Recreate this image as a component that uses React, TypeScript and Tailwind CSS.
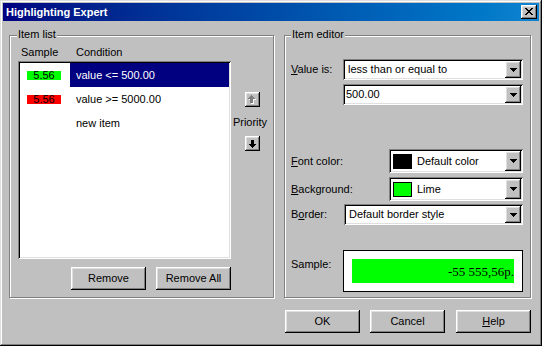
type Px = [number, number, number, number];

const raised =
  "shadow-[inset_-1px_-1px_0_#000000,inset_1px_1px_0_#ffffff,inset_-2px_-2px_0_#808080,inset_2px_2px_0_#dfdfdf]";
const sunken =
  "shadow-[inset_1px_1px_0_#808080,inset_-1px_-1px_0_#ffffff,inset_2px_2px_0_#000000,inset_-2px_-2px_0_#dfdfdf]";

const UP: Px[] = [[3, 0, 1, 1], [2, 1, 3, 1], [1, 2, 5, 1], [0, 3, 7, 1], [2, 4, 3, 4]];
const DOWN: Px[] = [[2, 0, 3, 4], [0, 4, 7, 1], [1, 5, 5, 1], [2, 6, 3, 1], [3, 7, 1, 1]];
const CLOSE: Px[] = [
  [0, 0, 2, 1], [6, 0, 2, 1], [1, 1, 2, 1], [5, 1, 2, 1], [2, 2, 4, 1], [3, 3, 2, 1],
  [2, 4, 4, 1], [1, 5, 2, 1], [5, 5, 2, 1], [0, 6, 2, 1], [6, 6, 2, 1],
];
const DROP: Px[] = [[0, 0, 7, 1], [1, 1, 5, 1], [2, 2, 3, 1], [3, 3, 1, 1]];

function Pixels({ rects, w, h, fill = "#000", shadow }: { rects: Px[]; w: number; h: number; fill?: string; shadow?: boolean }) {
  return (
    <svg width={w} height={h} viewBox={`0 0 ${w} ${h}`} shapeRendering="crispEdges">
      {shadow && rects.map((r, i) => <rect key={"s" + i} x={r[0] + 1} y={r[1] + 1} width={r[2]} height={r[3]} fill="#fff" />)}
      {rects.map((r, i) => <rect key={i} x={r[0]} y={r[1]} width={r[2]} height={r[3]} fill={fill} />)}
    </svg>
  );
}

function Button({ children, className = "" }: { children: React.ReactNode; className?: string }) {
  return (
    <div className={`flex h-[23px] w-[75px] items-center justify-center bg-[#c0c0c0] ${raised} ${className}`}>
      {children}
    </div>
  );
}

function GroupBox({ title, labelLeft, className = "", children }: { title: string; labelLeft: string; className?: string; children: React.ReactNode }) {
  return (
    <div className={`relative border border-[#808080] shadow-[inset_1px_1px_0_#ffffff,1px_1px_0_#ffffff] ${className}`}>
      <span className={`absolute -top-[8px] ${labelLeft} bg-[#c0c0c0] px-[1px] leading-[13px]`}>{title}</span>
      {children}
    </div>
  );
}

function Combo({ width, height = 21, children, textPad = "pl-[3px]" }: { width: string; height?: number; children: React.ReactNode; textPad?: string }) {
  return (
    <div className={`flex ${width} bg-white p-[2px] ${sunken}`} style={{ height }}>
      <div className={`flex flex-1 items-center ${textPad} whitespace-nowrap`}>{children}</div>
      <div className={`flex h-full w-[16px] items-center justify-center bg-[#c0c0c0] ${raised}`}>
        <Pixels rects={DROP} w={7} h={4} />
      </div>
    </div>
  );
}

function Row({ sample, color, text, selected }: { sample?: string; color?: string; text: string; selected?: boolean }) {
  return (
    <div className="flex h-[24px]">
      <div className="flex w-[50px] items-center pl-[7px]">
        {sample && (
          <div className={`flex h-[9px] w-[34px] items-center justify-center leading-[9px] ${color}`}>{sample}</div>
        )}
      </div>
      <div className={`flex flex-1 items-center pl-[6px] ${selected ? "bg-[#000080] text-white" : ""}`}>{text}</div>
    </div>
  );
}

export default function App() {
  return (
    <div className="font-['Liberation_Sans',Arial,sans-serif] text-[11px] leading-[13px] text-black">
      <div className="flex h-[346px] w-[542px] flex-col bg-[#c0c0c0] p-[3px] shadow-[inset_-1px_-1px_0_#000000,inset_1px_1px_0_#dfdfdf,inset_-2px_-2px_0_#808080,inset_2px_2px_0_#ffffff]">
        {/* title bar */}
        <div className="flex h-[18px] items-center justify-between bg-gradient-to-r from-[#000080] to-[#1084d0] pl-[3px] pr-[2px]">
          <span className="font-bold text-white">Highlighting Expert</span>
          <div className={`flex h-[14px] w-[16px] items-center justify-center bg-[#c0c0c0] pb-[1px] ${raised}`}>
            <Pixels rects={CLOSE} w={8} h={7} />
          </div>
        </div>

        <div className="flex w-[528px] flex-col pl-[6px] pt-[14px]">
          <div className="flex gap-[10px]">
            {/* Item list */}
            <GroupBox title="Item list" labelLeft="left-[7px]" className="h-[263px] w-[265px] shrink-0">
              <div className="flex pl-[8px] pt-[10px]">
                <div className="flex flex-col">
                  <div className="flex h-[13px] pl-[3px]">
                    <span className="w-[55px]">Sample</span>
                    <span>Condition</span>
                  </div>
                  <div className={`mt-[2px] flex h-[198px] w-[213px] flex-col bg-white p-[2px] ${sunken}`}>
                    <Row sample="5.56" color="bg-[#00ff00]" text="value <= 500.00" selected />
                    <Row sample="5.56" color="bg-[#ff0000]" text="value >= 5000.00" />
                    <Row text="new item" />
                  </div>
                  <div className="mt-[8px] flex justify-end gap-[10px]">
                    <Button>Remove</Button>
                    <Button>Remove All</Button>
                  </div>
                </div>
                <div className="flex w-[42px] flex-col items-center pt-[46px]">
                  <div className={`flex h-[15px] w-[15px] items-center justify-center bg-[#c0c0c0] ${raised}`}>
                    <Pixels rects={UP} w={8} h={9} fill="#808080" shadow />
                  </div>
                  <span className="mt-[9px] pr-[4px]">Priority</span>
                  <div className={`mt-[7px] flex h-[15px] w-[15px] items-center justify-center bg-[#c0c0c0] ${raised}`}>
                    <Pixels rects={DOWN} w={7} h={8} />
                  </div>
                </div>
              </div>
            </GroupBox>

            {/* Item editor */}
            <GroupBox title="Item editor" labelLeft="left-[6px]" className="h-[263px] w-[247px] shrink-0">
              <div className="flex flex-col pl-[6px] pr-[7px] pt-[23px]">
                <div className="flex items-center justify-between">
                  <span><u>V</u>alue is:</span>
                  <Combo width="w-[180px]">less than or equal to</Combo>
                </div>
                <div className="mt-[4px] flex justify-end">
                  <Combo width="w-[180px]" textPad="pl-[1px]">500.00</Combo>
                </div>
                <div className="mt-[44px] flex items-center justify-between">
                  <span><u>F</u>ont color:</span>
                  <Combo width="w-[134px]" height={24} textPad="pl-[2px]">
                    <div className="mr-[5px] h-[15px] w-[19px] bg-black" />
                    Default color
                  </Combo>
                </div>
                <div className="mt-[4px] flex items-center justify-between">
                  <span><u>B</u>ackground:</span>
                  <Combo width="w-[134px]" height={24} textPad="pl-[2px]">
                    <div className="mr-[5px] h-[15px] w-[19px] border border-black bg-[#00ff00]" />
                    Lime
                  </Combo>
                </div>
                <div className="mt-[3px] flex items-center justify-between">
                  <span>B<u>o</u>rder:</span>
                  <Combo width="w-[179px]">Default border style</Combo>
                </div>
                <div className="mt-[25px] flex items-start justify-between">
                  <span className="mt-[8px]">Sample:</span>
                  <div className="h-[42px] w-[180px] border border-black bg-white p-[8px]">
                    <div className="flex h-full items-center justify-end bg-[#00ff00] font-['Liberation_Serif',serif] text-[13px]">
                      -55 555,56р.
                    </div>
                  </div>
                </div>
              </div>
            </GroupBox>
          </div>

          <div className="mt-[12px] flex justify-end">
            <Button>OK</Button>
            <Button className="ml-[10px]">Cancel</Button>
            <Button className="ml-[11px]">
              <span><u>H</u>elp</span>
            </Button>
          </div>
        </div>
      </div>
    </div>
  );
}
